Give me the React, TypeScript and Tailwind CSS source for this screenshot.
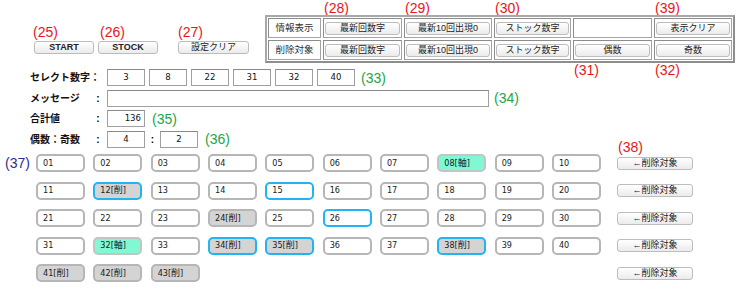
import React from "react";

const JP = "font-['Liberation_Sans','Noto_Sans_CJK_JP',sans-serif]";
const NUM = "font-['DejaVu_Sans_Condensed','DejaVu_Sans','Noto_Sans_CJK_JP',sans-serif]";

function Btn({ children, className = "" }: { children?: React.ReactNode; className?: string }) {
  return (
    <div
      className={`h-[13px] rounded-[3px] border border-[#bdbdbd] bg-linear-to-b from-white to-[#ebebeb] text-[9px] leading-none text-[#222] flex items-center justify-center whitespace-nowrap ${JP} ${className}`}
    >
      {children}
    </div>
  );
}

function Red({ children }: { children: React.ReactNode }) {
  return <div className={`block text-[14px] leading-[17px] text-[#e8141b] whitespace-nowrap ${JP}`}>{children}</div>;
}

function Green({ children }: { children: React.ReactNode }) {
  return <span className={`text-[14px] leading-[17px] text-[#22a544] whitespace-nowrap ${JP}`}>{children}</span>;
}

function Box({ children, className = "", align = "center" }: { children?: React.ReactNode; className?: string; align?: "center" | "right" }) {
  return (
    <div
      className={`h-[17px] border border-[#a0a0a0] border-t-[#8a8a8a] bg-white flex items-center text-[9.5px] text-[#111] ${NUM} ${
        align === "right" ? "justify-end pr-[3px]" : "justify-center"
      } ${className}`}
    >
      {children}
    </div>
  );
}

const DEL = [12, 24, 34, 35, 38, 41, 42, 43];
const AXIS = [8, 32];
const SEL = [12, 15, 26, 34, 35, 38];

function NumCell({ n }: { n: number }) {
  const d = DEL.includes(n);
  const a = AXIS.includes(n);
  const s = SEL.includes(n);
  const label = String(n).padStart(2, "0") + (d ? "[削]" : a ? "[軸]" : "");
  const bg = a ? "bg-[#7ff8d3]" : d ? "bg-[#d4d4d4]" : "bg-white";
  const border = s ? "border-[#22b3f3]" : a ? "border-[#c4c4c4]" : "border-[#b6b6b6]";
  return (
    <div
      className={`w-[49px] h-[18px] rounded-[5px] border-2 ${border} ${bg} flex items-center pl-[5px] text-[9px] leading-none text-[#1a1a1a] whitespace-nowrap ${NUM}`}
    >
      {label}
    </div>
  );
}

function DelBtn({ note }: { note?: boolean }) {
  return (
    <div className="relative ml-[16px]">
      {note && (
        <div className="absolute left-[1px] top-[-18px]">
          <Red>(38)</Red>
        </div>
      )}
      <Btn className="w-[76px]">←削除対象</Btn>
    </div>
  );
}

export default function App() {
  const rows: number[][] = [];
  for (let r = 0; r < 5; r++) {
    const row: number[] = [];
    for (let c = 1; c <= 10; c++) {
      const n = r * 10 + c;
      if (n <= 43) row.push(n);
    }
    rows.push(row);
  }

  const cols = "grid-cols-[53px_79px_88px_77px_79px_78px]";
  const cell = "border border-[#a4a4a4] border-l-[#8c8c8c] border-t-[#8c8c8c] flex items-center px-[1px]";

  return (
    <div className={`w-[750px] h-[290px] bg-white overflow-hidden ${JP}`}>
      {/* top section */}
      <div className="flex h-[66px]">
        <div className="w-[265px] pt-[24px] pl-[33px] flex items-start">
          <div className="flex flex-col">
            <Red>(25)</Red>
            <Btn className="w-[60px] ml-[1px] font-bold text-[8.5px]">START</Btn>
          </div>
          <div className="flex flex-col ml-[4px]">
            <div className="pl-[2px]">
              <Red>(26)</Red>
            </div>
            <Btn className="w-[60px] font-bold text-[8.5px]">STOCK</Btn>
          </div>
          <div className="flex flex-col ml-[20px]">
            <Red>(27)</Red>
            <Btn className="w-[71px]">設定クリア</Btn>
          </div>
        </div>

        <div className="flex flex-col">
          <div className={`grid ${cols} gap-x-[2px] pl-[3px] h-[15px]`}>
            <div />
            <div className="pl-[1px]"><Red>(28)</Red></div>
            <div className="pl-[1px]"><Red>(29)</Red></div>
            <div className="pl-[1px]"><Red>(30)</Red></div>
            <div />
            <div className="pl-[1px]"><Red>(39)</Red></div>
          </div>
          <div className={`border-2 border-[#a8a8a8] border-b-[#8e8e8e] border-r-[#8e8e8e] p-[1px] grid ${cols} grid-rows-[20px_20px] gap-[2px] bg-white`}>
            <div className={`${cell} justify-center text-[9.5px] text-[#333]`}>情報表示</div>
            <div className={cell}><Btn className="w-full">最新回数字</Btn></div>
            <div className={cell}><Btn className="w-full">最新10回出現0</Btn></div>
            <div className={cell}><Btn className="w-full">ストック数字</Btn></div>
            <div className={cell} />
            <div className={cell}><Btn className="w-full">表示クリア</Btn></div>

            <div className={`${cell} justify-center text-[9.5px] text-[#333]`}>削除対象</div>
            <div className={cell}><Btn className="w-full">最新回数字</Btn></div>
            <div className={cell}><Btn className="w-full">最新10回出現0</Btn></div>
            <div className={cell}><Btn className="w-full">ストック数字</Btn></div>
            <div className={cell}><Btn className="w-full">偶数</Btn></div>
            <div className={cell}><Btn className="w-full">奇数</Btn></div>
          </div>
          <div className={`grid ${cols} gap-x-[2px] pl-[3px] h-[15px]`}>
            <div />
            <div />
            <div />
            <div />
            <div className="pl-[1px] -mt-[1px]"><Red>(31)</Red></div>
            <div className="pl-[1px] -mt-[1px]"><Red>(32)</Red></div>
          </div>
        </div>
      </div>

      {/* label section */}
      <div className="mt-[3px] pl-[30px] flex flex-col gap-[3.5px]">
        <div className="flex items-center h-[17px]">
          <div className="w-[77px] text-[10px] font-bold text-[#111] whitespace-nowrap">セレクト数字：</div>
          <div className="flex gap-[4px]">
            {["3", "8", "22", "31", "32", "40"].map((v) => (
              <Box key={v} className="w-[38px]">{v}</Box>
            ))}
          </div>
          <span className="ml-[6px]"><Green>(33)</Green></span>
        </div>
        <div className="flex items-center h-[17px]">
          <div className="w-[65px] text-[10px] font-bold text-[#111] whitespace-nowrap">メッセージ</div>
          <div className="w-[6px] mr-[6px] text-[10px] font-bold text-center">:</div>
          <Box className="w-[382px] h-[16px]" />
          <span className="ml-[5px]"><Green>(34)</Green></span>
        </div>
        <div className="flex items-center h-[17px]">
          <div className="w-[65px] text-[10px] font-bold text-[#111] whitespace-nowrap">合計値</div>
          <div className="w-[6px] mr-[6px] text-[10px] font-bold text-center">:</div>
          <Box className="w-[38px]" align="right">136</Box>
          <span className="ml-[7px]"><Green>(35)</Green></span>
        </div>
        <div className="flex items-center h-[17px]">
          <div className="w-[65px] text-[10px] font-bold text-[#111] whitespace-nowrap">偶数：奇数</div>
          <div className="w-[6px] mr-[6px] text-[10px] font-bold text-center">:</div>
          <Box className="w-[38px]">4</Box>
          <div className="w-[15px] text-[10px] font-bold text-center">:</div>
          <Box className="w-[38px]">2</Box>
          <span className="ml-[7px]"><Green>(36)</Green></span>
        </div>
      </div>

      {/* number grid */}
      <div className="mt-[6.5px] flex flex-col gap-[9.5px]">
        {rows.map((row, i) => (
          <div key={i} className={`flex items-center h-[18px] ${i === 0 ? "pl-[5px]" : "pl-[36px]"}`}>
            {i === 0 && (
              <span className={`w-[31px] text-[14px] leading-[17px] text-[#2a2f8f] ${JP}`}>(37)</span>
            )}
            <div className="w-[565px] flex gap-x-[8.33px]">
              {row.map((n) => (
                <NumCell key={n} n={n} />
              ))}
            </div>
            <DelBtn note={i === 0} />
          </div>
        ))}
      </div>
    </div>
  );
}
